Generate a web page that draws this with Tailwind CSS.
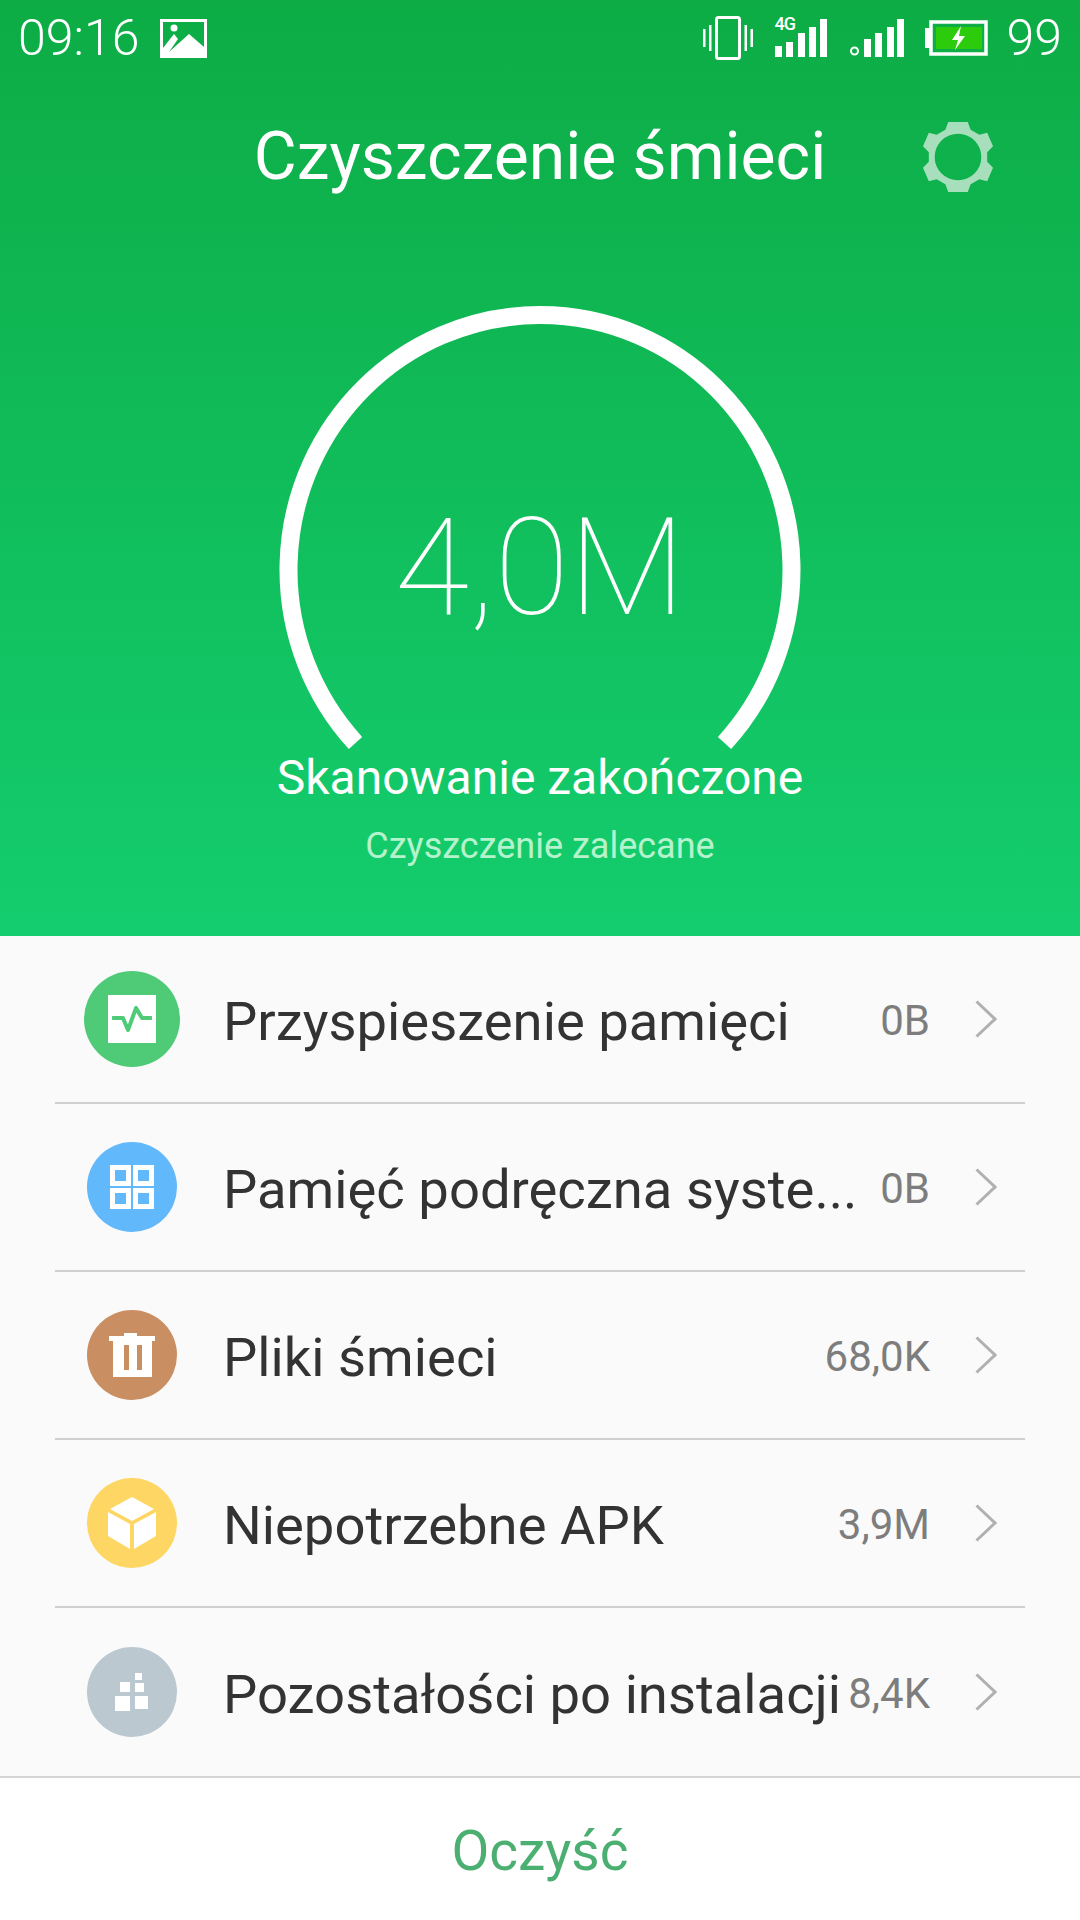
<!DOCTYPE html>
<html lang="pl">
<head>
    <meta charset="UTF-8" />
    <meta name="viewport" content="width=device-width, initial-scale=1.0" />
    <title>Czyszczenie śmieci</title>
    <script src="https://cdn.jsdelivr.net/npm/@tailwindcss/browser@4"></script>
</head>
<body class="bg-white font-['Roboto',sans-serif]">
<div class="w-[1080px] h-[1920px] flex flex-col overflow-hidden">

    <!-- green header -->
    <div class="h-[936px] bg-gradient-to-b from-[#0dac45] to-[#14cd6e] text-white flex flex-col items-center">
        <!-- status bar -->
        <div class="w-full h-[76px] flex items-center justify-between pl-[18px] pr-[18px]">
            <div class="flex items-center gap-[21px]">
                <span class="text-[50px] leading-none font-light">09:16</span>
                <svg class="w-[48px] h-[39px]" viewBox="0 0 48 39">
                    <path fill="#fff" fill-rule="evenodd" d="M0 0h47v39H0zM3 3v26l11-14 4 5-9 13 20-18 15 13V3z"/>
                    <circle cx="14" cy="9" r="3.5" fill="#fff"/>
                </svg>
            </div>
            <div class="flex items-center">
                <svg class="w-[50px] h-[44px]" viewBox="0 0 50 44" fill="#fff">
                    <rect x="13.5" y="1.5" width="23" height="41" rx="2" fill="none" stroke="#fff" stroke-width="3"/>
                    <rect x="0" y="13" width="2.5" height="18"/>
                    <rect x="6" y="9" width="2.5" height="26"/>
                    <rect x="41.5" y="9" width="2.5" height="26"/>
                    <rect x="47.5" y="13" width="2.5" height="18"/>
                </svg>
                <div class="relative w-[52px] h-[40px] ml-[22px]">
                    <span class="absolute left-0 top-[-3px] text-[18px] leading-[18px] font-medium tracking-[-1px]">4G</span>
                    <svg class="w-[52px] h-[40px]" viewBox="0 0 52 40" fill="#fff">
                        <rect x="0" y="28" width="7" height="11"/>
                        <rect x="11" y="24" width="7" height="15"/>
                        <rect x="23" y="15" width="7" height="24"/>
                        <rect x="34" y="9" width="7" height="30"/>
                        <rect x="45" y="1" width="7" height="38"/>
                    </svg>
                </div>
                <svg class="w-[54px] h-[40px] ml-[23px]" viewBox="0 0 54 40" fill="#fff">
                    <circle cx="4.5" cy="33" r="3.5" fill="none" stroke="#fff" stroke-width="2"/>
                    <rect x="14" y="21" width="7" height="18"/>
                    <rect x="25" y="15" width="7" height="24"/>
                    <rect x="37" y="9" width="7" height="30"/>
                    <rect x="47" y="1" width="7" height="38"/>
                </svg>
                <svg class="w-[63px] h-[36px] ml-[21px]" viewBox="0 0 63 36">
                    <rect x="0" y="8" width="5" height="20" fill="#fff"/>
                    <rect x="6" y="2" width="55" height="32" fill="none" stroke="#fff" stroke-width="3.5"/>
                    <rect x="11" y="7" width="46" height="22" fill="#2ccb0c"/>
                    <path fill="#fff" d="M36 6 27 20h6l-3 10 10-14h-6z"/>
                </svg>
                <span class="text-[50px] leading-none font-light ml-[19px]">99</span>
            </div>
        </div>

        <!-- title -->
        <div class="relative w-full h-[162px] flex items-center justify-center">
            <h1 class="text-[66px] font-normal leading-none">Czyszczenie śmieci</h1>
            <svg class="absolute left-[923px] top-[46px] w-[70px] h-[70px]" viewBox="0 0 72 72" fill="#a7dfbd">
                <path fill-rule="evenodd" d="M26 0h20l3 8 9 5 8-2 6 14-6 6v10l6 6-6 14-8-2-9 5-3 8H26l-3-8-9-5-8 2-6-14 6-6V31l-6-6 6-14 8 2 9-5zM36 12a24 24 0 1 0 0 48 24 24 0 1 0 0-48z"/>
            </svg>
        </div>

        <!-- gauge -->
        <div class="relative w-[540px] h-[460px] mt-[59px]">
            <svg class="w-[540px] h-[460px]" viewBox="0 0 540 460">
                <path d="M85.5 446A251.5 254.8 0 1 1 454.5 446" fill="none" stroke="#fff" stroke-width="18"/>
            </svg>
            <div class="absolute inset-x-0 top-[201px] text-center text-[136px] leading-[140px] font-thin">4,0M</div>
        </div>

        <p class="text-[48px] leading-[54px] mt-[-6px]">Skanowanie zakończone</p>
        <p class="text-[36px] leading-[40px] mt-[21px] text-[#b5f3cd]">Czyszczenie zalecane</p>
    </div>

    <!-- list -->
    <div class="bg-[#fafafa] h-[840px] px-[55px] flex flex-col">
        <div class="h-[168px] flex items-center border-b-2 border-[#cfcfcf]">
            <div class="w-[154px] flex-none flex items-center justify-center">
                <div class="w-[96px] h-[96px] rounded-full bg-[#4fcb78] flex items-center justify-center">
                    <div class="w-[48px] h-[48px] bg-white flex items-center justify-center">
                        <svg class="w-[40px] h-[30px]" viewBox="0 0 40 30"><path d="M1 14h10l5 12 8-22 6 10h9" fill="none" stroke="#4fcb78" stroke-width="4" stroke-linejoin="round" stroke-linecap="round"/></svg>
                    </div>
                </div>
            </div>
            <span class="ml-[14px] pt-[5px] flex-1 min-w-0 whitespace-nowrap text-[54.4px] text-[#333]">Przyspieszenie pamięci</span>
            <span class="text-[42px] text-[#7d7d7d] mr-[45px] pt-[2px]">0B</span>
            <svg class="w-[22px] h-[38px] flex-none mr-[28px]" viewBox="0 0 22 38"><path d="M1.5 1.5 20 19 1.5 36.5" fill="none" stroke="#b0b0b0" stroke-width="3"/></svg>
        </div>
        <div class="h-[168px] flex items-center border-b-2 border-[#cfcfcf]">
            <div class="w-[154px] flex-none flex items-center justify-center">
                <div class="w-[90px] h-[90px] rounded-full bg-[#61b8fb] flex items-center justify-center">
                    <svg class="w-[44px] h-[44px]" viewBox="0 0 44 44" fill="none" stroke="#fff" stroke-width="5">
                        <rect x="2.5" y="2.5" width="16" height="16"/>
                        <rect x="25.5" y="2.5" width="16" height="16"/>
                        <rect x="2.5" y="25.5" width="16" height="16"/>
                        <rect x="25.5" y="25.5" width="16" height="16"/>
                    </svg>
                </div>
            </div>
            <span class="ml-[14px] pt-[5px] flex-1 min-w-0 whitespace-nowrap text-[54.4px] text-[#333]">Pamięć podręczna syste...</span>
            <span class="text-[42px] text-[#7d7d7d] mr-[45px] pt-[2px]">0B</span>
            <svg class="w-[22px] h-[38px] flex-none mr-[28px]" viewBox="0 0 22 38"><path d="M1.5 1.5 20 19 1.5 36.5" fill="none" stroke="#b0b0b0" stroke-width="3"/></svg>
        </div>
        <div class="h-[168px] flex items-center border-b-2 border-[#cfcfcf]">
            <div class="w-[154px] flex-none flex items-center justify-center">
                <div class="w-[90px] h-[90px] rounded-full bg-[#c98f62] flex items-center justify-center">
                    <svg class="w-[46px] h-[44px]" viewBox="0 0 46 44">
                        <path fill="#fff" fill-rule="evenodd" d="M15 0h13v3h18v5h-3v36H4V8H0V3h15zM15 12v25h5V12zM28 12v25h5V12z"/>
                    </svg>
                </div>
            </div>
            <span class="ml-[14px] pt-[5px] flex-1 min-w-0 whitespace-nowrap text-[54.4px] text-[#333]">Pliki śmieci</span>
            <span class="text-[42px] text-[#7d7d7d] mr-[45px] pt-[2px]">68,0K</span>
            <svg class="w-[22px] h-[38px] flex-none mr-[28px]" viewBox="0 0 22 38"><path d="M1.5 1.5 20 19 1.5 36.5" fill="none" stroke="#b0b0b0" stroke-width="3"/></svg>
        </div>
        <div class="h-[168px] flex items-center border-b-2 border-[#cfcfcf]">
            <div class="w-[154px] flex-none flex items-center justify-center">
                <div class="w-[90px] h-[90px] rounded-full bg-[#fdd663] flex items-center justify-center">
                    <svg class="w-[48px] h-[52px]" viewBox="0 0 48 52" fill="#fff">
                        <path d="M24 0 46 12 24 24 2 12z"/>
                        <path d="M0 15 22 27V52L0 39z"/>
                        <path d="M48 15 26 27V52L48 39z"/>
                    </svg>
                </div>
            </div>
            <span class="ml-[14px] pt-[5px] flex-1 min-w-0 whitespace-nowrap text-[54.4px] text-[#333]">Niepotrzebne APK</span>
            <span class="text-[42px] text-[#7d7d7d] mr-[45px] pt-[2px]">3,9M</span>
            <svg class="w-[22px] h-[38px] flex-none mr-[28px]" viewBox="0 0 22 38"><path d="M1.5 1.5 20 19 1.5 36.5" fill="none" stroke="#b0b0b0" stroke-width="3"/></svg>
        </div>
        <div class="h-[168px] flex items-center">
            <div class="w-[154px] flex-none flex items-center justify-center">
                <div class="w-[90px] h-[90px] rounded-full bg-[#bcc8cf] flex items-center justify-center">
                    <svg class="w-[34px] h-[38px]" viewBox="0 0 34 38" fill="#fff">
                        <rect x="20" y="0" width="7" height="7"/>
                        <rect x="5" y="9" width="10" height="10"/>
                        <rect x="20" y="10" width="9" height="9"/>
                        <rect x="0" y="23" width="15" height="15"/>
                        <rect x="20" y="23" width="13" height="13"/>
                    </svg>
                </div>
            </div>
            <span class="ml-[14px] pt-[5px] flex-1 min-w-0 whitespace-nowrap text-[54.4px] text-[#333]">Pozostałości po instalacji</span>
            <span class="text-[42px] text-[#7d7d7d] mr-[45px] pt-[2px]">8,4K</span>
            <svg class="w-[22px] h-[38px] flex-none mr-[28px]" viewBox="0 0 22 38"><path d="M1.5 1.5 20 19 1.5 36.5" fill="none" stroke="#b0b0b0" stroke-width="3"/></svg>
        </div>
    </div>

    <!-- bottom action -->
    <div class="flex-1 bg-white border-t-2 border-[#d4d4d4] flex items-center justify-center">
        <span class="text-[55px] text-[#4caf72] pt-[4px]">Oczyść</span>
    </div>
</div>
</body>
</html>
